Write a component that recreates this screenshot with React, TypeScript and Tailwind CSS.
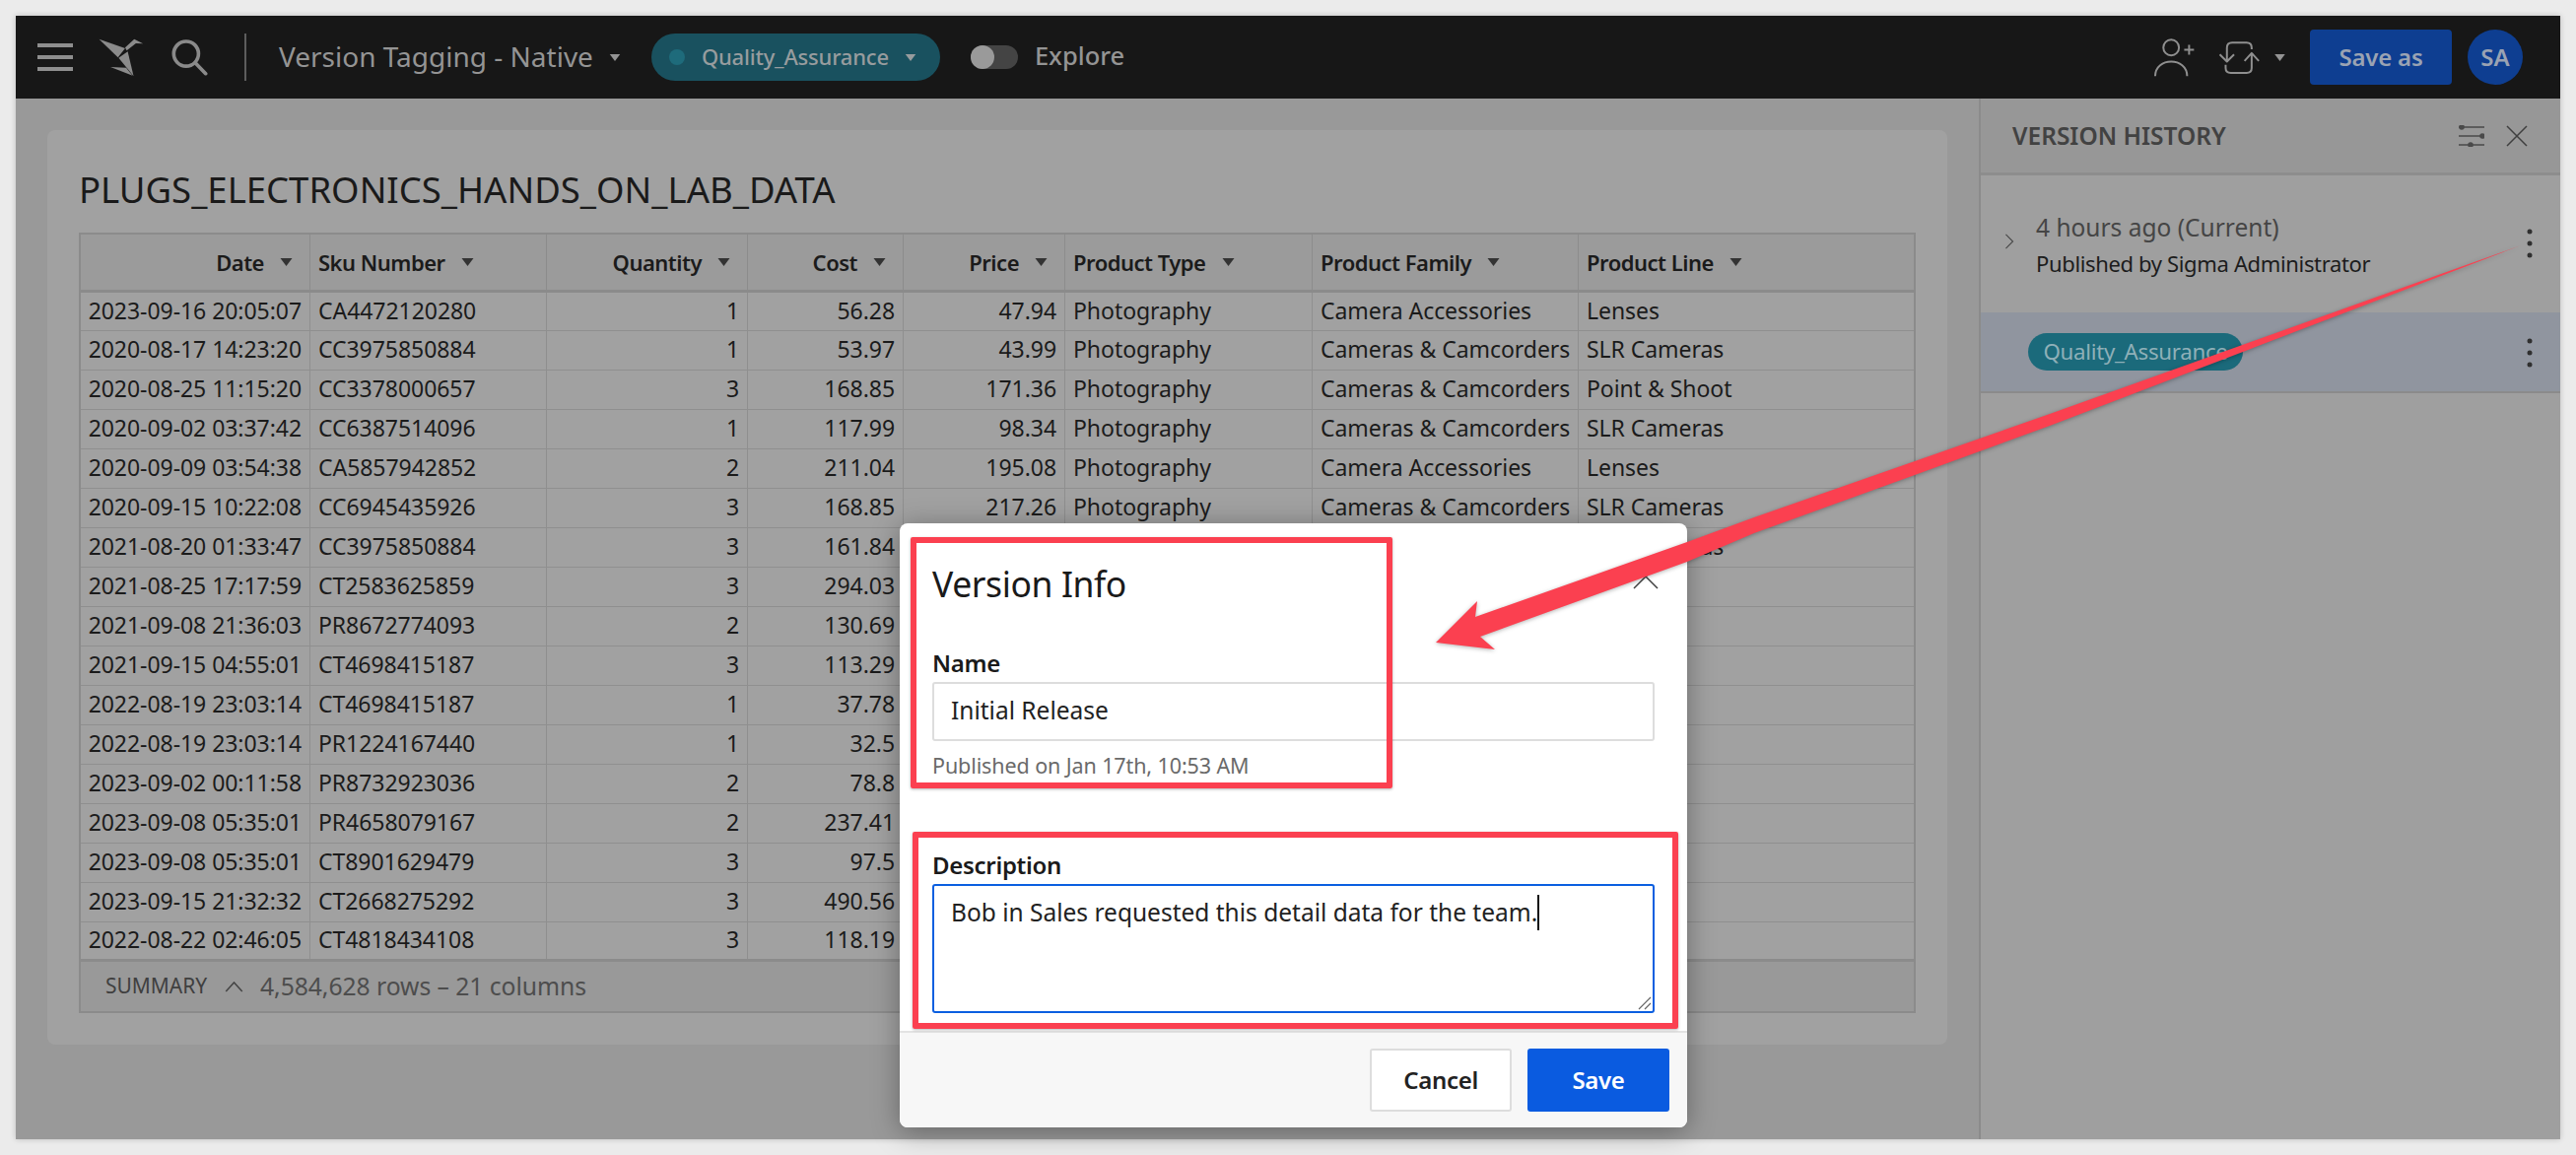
// App.tsx
import React from 'react';

const rows = [
    ['2023-09-16 20:05:07', 'CA4472120280', '1', '56.28', '47.94', 'Photography', 'Camera Accessories', 'Lenses'],
    ['2020-08-17 14:23:20', 'CC3975850884', '1', '53.97', '43.99', 'Photography', 'Cameras & Camcorders', 'SLR Cameras'],
    ['2020-08-25 11:15:20', 'CC3378000657', '3', '168.85', '171.36', 'Photography', 'Cameras & Camcorders', 'Point & Shoot'],
    ['2020-09-02 03:37:42', 'CC6387514096', '1', '117.99', '98.34', 'Photography', 'Cameras & Camcorders', 'SLR Cameras'],
    ['2020-09-09 03:54:38', 'CA5857942852', '2', '211.04', '195.08', 'Photography', 'Camera Accessories', 'Lenses'],
    ['2020-09-15 10:22:08', 'CC6945435926', '3', '168.85', '217.26', 'Photography', 'Cameras & Camcorders', 'SLR Cameras'],
    ['2021-08-20 01:33:47', 'CC3975850884', '3', '161.84', '', '', '', 'SLR Cameras'],
    ['2021-08-25 17:17:59', 'CT2583625859', '3', '294.03', '', '', '', ''],
    ['2021-09-08 21:36:03', 'PR8672774093', '2', '130.69', '', '', '', ''],
    ['2021-09-15 04:55:01', 'CT4698415187', '3', '113.29', '', '', '', ''],
    ['2022-08-19 23:03:14', 'CT4698415187', '1', '37.78', '', '', '', ''],
    ['2022-08-19 23:03:14', 'PR1224167440', '1', '32.5', '', '', '', ''],
    ['2023-09-02 00:11:58', 'PR8732923036', '2', '78.8', '', '', '', ''],
    ['2023-09-08 05:35:01', 'PR4658079167', '2', '237.41', '', '', '', ''],
    ['2023-09-08 05:35:01', 'CT8901629479', '3', '97.5', '', '', '', ''],
    ['2023-09-15 21:32:32', 'CT2668275292', '3', '490.56', '', '', '', ''],
    ['2022-08-22 02:46:05', 'CT4818434108', '3', '118.19', '', '', '', ''],
];

const headers = [
    { label: 'Date', right: true },
    { label: 'Sku Number', right: false },
    { label: 'Quantity', right: true },
    { label: 'Cost', right: true },
    { label: 'Price', right: true },
    { label: 'Product Type', right: false },
    { label: 'Product Family', right: false },
    { label: 'Product Line', right: false },
];

const gridCols = 'grid grid-cols-[233px_240px_204px_158px_164px_251px_270px_1fr]';

const Caret = ({ className }: { className: string }) => (
    <svg viewBox="0 0 12 8" className={className} fill="currentColor">
        <path d="M0 0h12L6 8z" />
    </svg>
);

const Dots = ({ className }: { className?: string }) => (
    <svg viewBox="0 0 6 30" className={`w-[6px] h-[30px] text-[#2f2f2f] ${className ?? ''}`} fill="currentColor">
        <circle cx="3" cy="3" r="2.5" />
        <circle cx="3" cy="15" r="2.5" />
        <circle cx="3" cy="27" r="2.5" />
    </svg>
);

const TopBar = () => (
    <div className="h-[84px] bg-[#171717] flex items-center text-[#949494] shrink-0">
        {/* burger */}
        <div className="ml-[22px] w-[36px] flex flex-col gap-2">
            <div className="h-1 bg-[#8e8e8e]" />
            <div className="h-1 bg-[#8e8e8e]" />
            <div className="h-1 bg-[#8e8e8e]" />
        </div>
        {/* logo */}
        <svg viewBox="300 110 136 118" className="ml-[26px] w-[46px] h-[39px]" fill="#8b8b8b">
            <path d="M300 112l80 28-22 28z" />
            <path d="M380 138l28-26 27 14-22-1-28 22z" />
            <path d="M360 170l28-20 18 76z" />
            <path d="M335 198l48 2 20 24z" />
        </svg>
        {/* search */}
        <svg viewBox="520 112 112 112" className="ml-[28px] w-[37px] h-[37px]" fill="none" stroke="#8a8a8a" strokeWidth="11" strokeLinecap="round">
            <circle cx="565" cy="156" r="38" />
            <path d="M593 184l32 33" />
        </svg>
        <div className="ml-[37px] w-[2px] h-[48px] bg-[#5d5d5d]" />
        <span className="ml-[33px] mb-[3px] text-[28px] leading-none">Version Tagging - Native</span>
        <Caret className="ml-[16px] w-[12px] h-[7px]" />
        <div className="ml-[31px] h-[48px] w-[293px] rounded-full bg-[#19515f] flex items-center pl-[18px]">
            <span className="w-[16px] h-[16px] rounded-full bg-[#1e6b7b]" />
            <span className="ml-[17px] mb-[2px] text-[22px] tracking-[-0.2px] text-[#979c9e] font-medium">Quality_Assurance</span>
            <Caret className="ml-[16px] w-[12px] h-[7px] text-[#979c9e]" />
        </div>
        <div className="ml-[31px] w-[48px] h-[24px] rounded-full bg-[#444] relative">
            <div className="absolute left-0 top-0 w-[24px] h-[24px] rounded-full bg-[#9a9a9a]" />
        </div>
        <span className="ml-[17px] mb-[4px] text-[25.5px] font-medium">Explore</span>

        <div className="ml-auto flex items-center">
            <svg viewBox="110 80 130 122" className="w-[43px] h-[41px]" fill="none" stroke="#8f8f8f" strokeWidth="6">
                <circle cx="165" cy="110" r="24" />
                <path d="M116 198c0-60 98-60 98 0M205 117h30M220 102v30" />
            </svg>
            <svg viewBox="304 88 126 100" className="ml-[23px] w-[42px] h-[33px]" fill="none" stroke="#8f8f8f" strokeWidth="6" strokeLinejoin="round">
                <path d="M308 128l22 22 22-22M330 150v-42q0-16 16-16h44q16 0 16 16v4" />
                <path d="M384 148l22-24 22 24M406 124v46q0 15-16 15h-48q-16 0-16-15v-10" />
            </svg>
            <Caret className="ml-[14px] w-[13px] h-[7px]" />
            <button className="ml-[24px] w-[144px] h-[56px] rounded-[4px] bg-[#0e3e91] text-[24px] font-semibold tracking-[-0.2px] text-[#9aa3b3]">Save as</button>
            <div className="ml-[16px] mr-[38px] w-[56px] h-[56px] rounded-full bg-[#0e3e91] flex items-center justify-center text-[24px] font-semibold text-[#9aa3b3]">SA</div>
        </div>
    </div>
);

const DataTable = () => (
    <div className="h-[792px] border-2 border-[#8b8b8b] flex flex-col text-[23px] tracking-[-0.05px] text-[#1b1b1b]">
        <div className={`${gridCols} h-[59px] border-b-[3px] border-[#8b8b8b] bg-[#9b9b9b] shrink-0 text-[22px] tracking-[-0.5px] font-semibold`}>
            {headers.map((h) => (
                <div key={h.label} className={`flex items-center gap-[16px] border-r border-[#8c8c8c] last:border-r-0 pr-[17px] ${h.right ? 'justify-end' : 'pl-[8px]'}`}>
                    <span>{h.label}</span>
                    <Caret className="w-[13px] h-[8px] text-[#333]" />
                </div>
            ))}
        </div>
        {rows.map((row, i) => (
            <div key={i} className={`${gridCols} shrink-0 ${i === 0 ? 'h-[39px]' : 'h-[40px]'} ${i === rows.length - 1 ? 'border-b-[3px] border-[#8b8b8b]' : 'border-b border-[#8f8f8f]'}`}>
                {row.map((cell, j) => (
                    <div key={j} className={`flex items-center pb-[2px] border-r border-[#8f8f8f] last:border-r-0 whitespace-nowrap ${headers[j].right ? 'justify-end pr-[8px]' : 'pl-[8px]'}`}>
                        {cell}
                    </div>
                ))}
            </div>
        ))}
        <div className="flex-1 bg-[#999] flex items-center pl-[25px] text-[#4d4d4d]">
            <span className="text-[21px] text-[#3f3f3f]">SUMMARY</span>
            <svg viewBox="0 0 20 12" className="ml-[18px] w-[19px] h-[11px]" fill="none" stroke="#444" strokeWidth="1.6">
                <path d="M1 11l9-10 9 10" />
            </svg>
            <span className="ml-[17px] text-[24.7px]">4,584,628 rows – 21 columns</span>
        </div>
    </div>
);

const VersionPanel = () => (
    <div className="w-[590px] border-l-2 border-[#8b8b8b] flex flex-col shrink-0 bg-[#9f9f9f]">
        <div className="h-[78px] bg-[#979797] border-b-[3px] border-[#8d8d8d] flex items-center pl-[32px] shrink-0">
            <span className="mt-[2px] text-[24.5px] font-semibold text-[#424242]">VERSION HISTORY</span>
            <svg viewBox="0 0 26 22" className="ml-auto w-[26px] h-[22px]" stroke="#4a4a4a" strokeWidth="1.6" fill="#4a4a4a">
                <path d="M0 2h26M0 11h26M0 20h26" />
                <circle cx="3" cy="2" r="2" />
                <circle cx="24" cy="11" r="2" />
                <circle cx="12" cy="20" r="2" />
            </svg>
            <svg viewBox="0 0 22 22" className="ml-[22px] mr-[33px] w-[22px] h-[22px]" stroke="#3f3f3f" strokeWidth="1.5">
                <path d="M1 1l20 20M21 1L1 21" />
            </svg>
        </div>
        <div className="h-[139px] flex items-center relative shrink-0">
            <svg viewBox="0 0 10 18" className="ml-[24px] w-[10px] h-[16px] mt-[-6px]" fill="none" stroke="#4a4a4a" strokeWidth="1.3">
                <path d="M1 1l8 8-8 8" />
            </svg>
            <div className="ml-[22px] flex flex-col mt-[2px]">
                <span className="text-[24.5px] leading-[36px] text-[#454545]">4 hours ago (Current)</span>
                <span className="text-[22px] leading-[36px] tracking-[-0.35px] text-[#1c1c1c]">Published by Sigma Administrator</span>
            </div>
            <Dots className="absolute right-[28px] top-[54px]" />
        </div>
        <div className="h-[82px] bg-[#90959f] border-b-2 border-[#8b8b8b] flex items-center relative shrink-0 pl-[48px]">
            <div className="h-[38px] w-[218px] rounded-full bg-[#1b6a7b] flex items-center justify-center text-[22.3px] tracking-[-0.3px] text-[#8fb0b8]">Quality_Assurance</div>
            <Dots className="absolute right-[28px] top-[26px]" />
        </div>
    </div>
);

const Modal = () => (
    <div className="absolute left-[913px] top-[531px] w-[799px] h-[613px] bg-white rounded-lg shadow-[0_4px_28px_rgba(0,0,0,0.35)] flex flex-col text-[#1a1a1a] overflow-hidden">
        <div className="flex-1 px-[33px] relative">
            <div className="h-[125px] flex items-center text-[35.5px] tracking-[-0.4px] pb-[2px]">Version Info</div>
            <svg viewBox="0 0 26 26" className="absolute right-[29px] top-[41px] w-[26px] h-[26px]" stroke="#3f3f3f" strokeWidth="1.5">
                <path d="M1 1l24 24M25 1L1 25" />
            </svg>
            <label className="block text-[24px] font-semibold tracking-[-0.3px] leading-[34px]">Name</label>
            <div className="mt-[2px] h-[60px] border-2 border-[#ddd] rounded-[3px] flex items-center pl-[17px] pb-[2px] text-[24.5px] text-[#222]">Initial Release</div>
            <div className="mt-[10px] text-[21.5px] tracking-[-0.1px] leading-[30px] text-[#6a6a6a]">Published on Jan 17th, 10:53 AM</div>
            <label className="block mt-[69px] text-[24px] font-semibold tracking-[-0.3px] leading-[34px]">Description</label>
            <div className="mt-[2px] h-[131px] border-2 border-[#0b5fe0] rounded-[3px] pl-[17px] pt-[9px] text-[24.5px] leading-[36px] text-[#222] relative">
                Bob in Sales requested this detail data for the team.
                <span className="inline-block align-top w-[2px] h-[36px] bg-[#111]" />
                <svg viewBox="0 0 14 14" className="absolute right-[1px] bottom-[1px] w-[14px] h-[14px]" stroke="#666" strokeWidth="1.2">
                    <path d="M1 13L13 1M7 13l6-6" />
                </svg>
            </div>
        </div>
        <div className="h-[98px] bg-[#f7f7f7] border-t-2 border-[#e3e3e3] flex items-center justify-end gap-4 pr-[18px] shrink-0">
            <button className="w-[144px] h-[64px] bg-white border-2 border-[#ddd] rounded-[3px] text-[24px] font-semibold tracking-[-0.3px] text-[#222]">Cancel</button>
            <button className="w-[144px] h-[64px] bg-[#0a5be0] rounded-[3px] text-[24px] font-semibold tracking-[-0.3px] text-white">Save</button>
        </div>
    </div>
);

const App = () => {
    return (
        <div className="relative w-[2614px] h-[1172px] p-4 bg-[#ebebeb] overflow-hidden font-['Noto_Sans',sans-serif]">
            <div className="h-full flex flex-col shadow-[0_0_6px_rgba(0,0,0,0.2)]">
                <TopBar />
                <div className="flex-1 flex bg-[#999] min-h-0">
                    <div className="flex-1 p-8">
                        <div className="h-[928px] rounded-lg bg-[#a1a1a1] px-8 pt-8">
                            <div className="h-[72px] text-[36.5px] text-[#1a1a1a] leading-[56px]">PLUGS_ELECTRONICS_HANDS_ON_LAB_DATA</div>
                            <DataTable />
                        </div>
                    </div>
                    <VersionPanel />
                </div>
            </div>

            <Modal />

            {/* screenshot annotations */}
            <div className="absolute left-[924px] top-[545px] w-[489px] h-[255px] border-[6px] border-[#fb4050] rounded-[2px] shadow-[0_1px_3px_rgba(0,0,0,0.3)]" />
            <div className="absolute left-[926px] top-[844px] w-[777px] h-[200px] border-[6px] border-[#fb4050] rounded-[2px] shadow-[0_1px_3px_rgba(0,0,0,0.3)]" />
            <svg viewBox="0 0 2614 1172" className="absolute left-0 top-0 w-[2614px] h-[1172px] pointer-events-none drop-shadow-[0_1px_2px_rgba(0,0,0,0.3)]">
                <path d="M2558 249L2080 420L1943 468L1780 525L1712 550L1497 626L1499 610L1457 652L1517 659L1502 646L1712 570L1780 541L1943 482L2080 432Z" fill="#fb4050" />
            </svg>
        </div>
    );
};

export default App;
